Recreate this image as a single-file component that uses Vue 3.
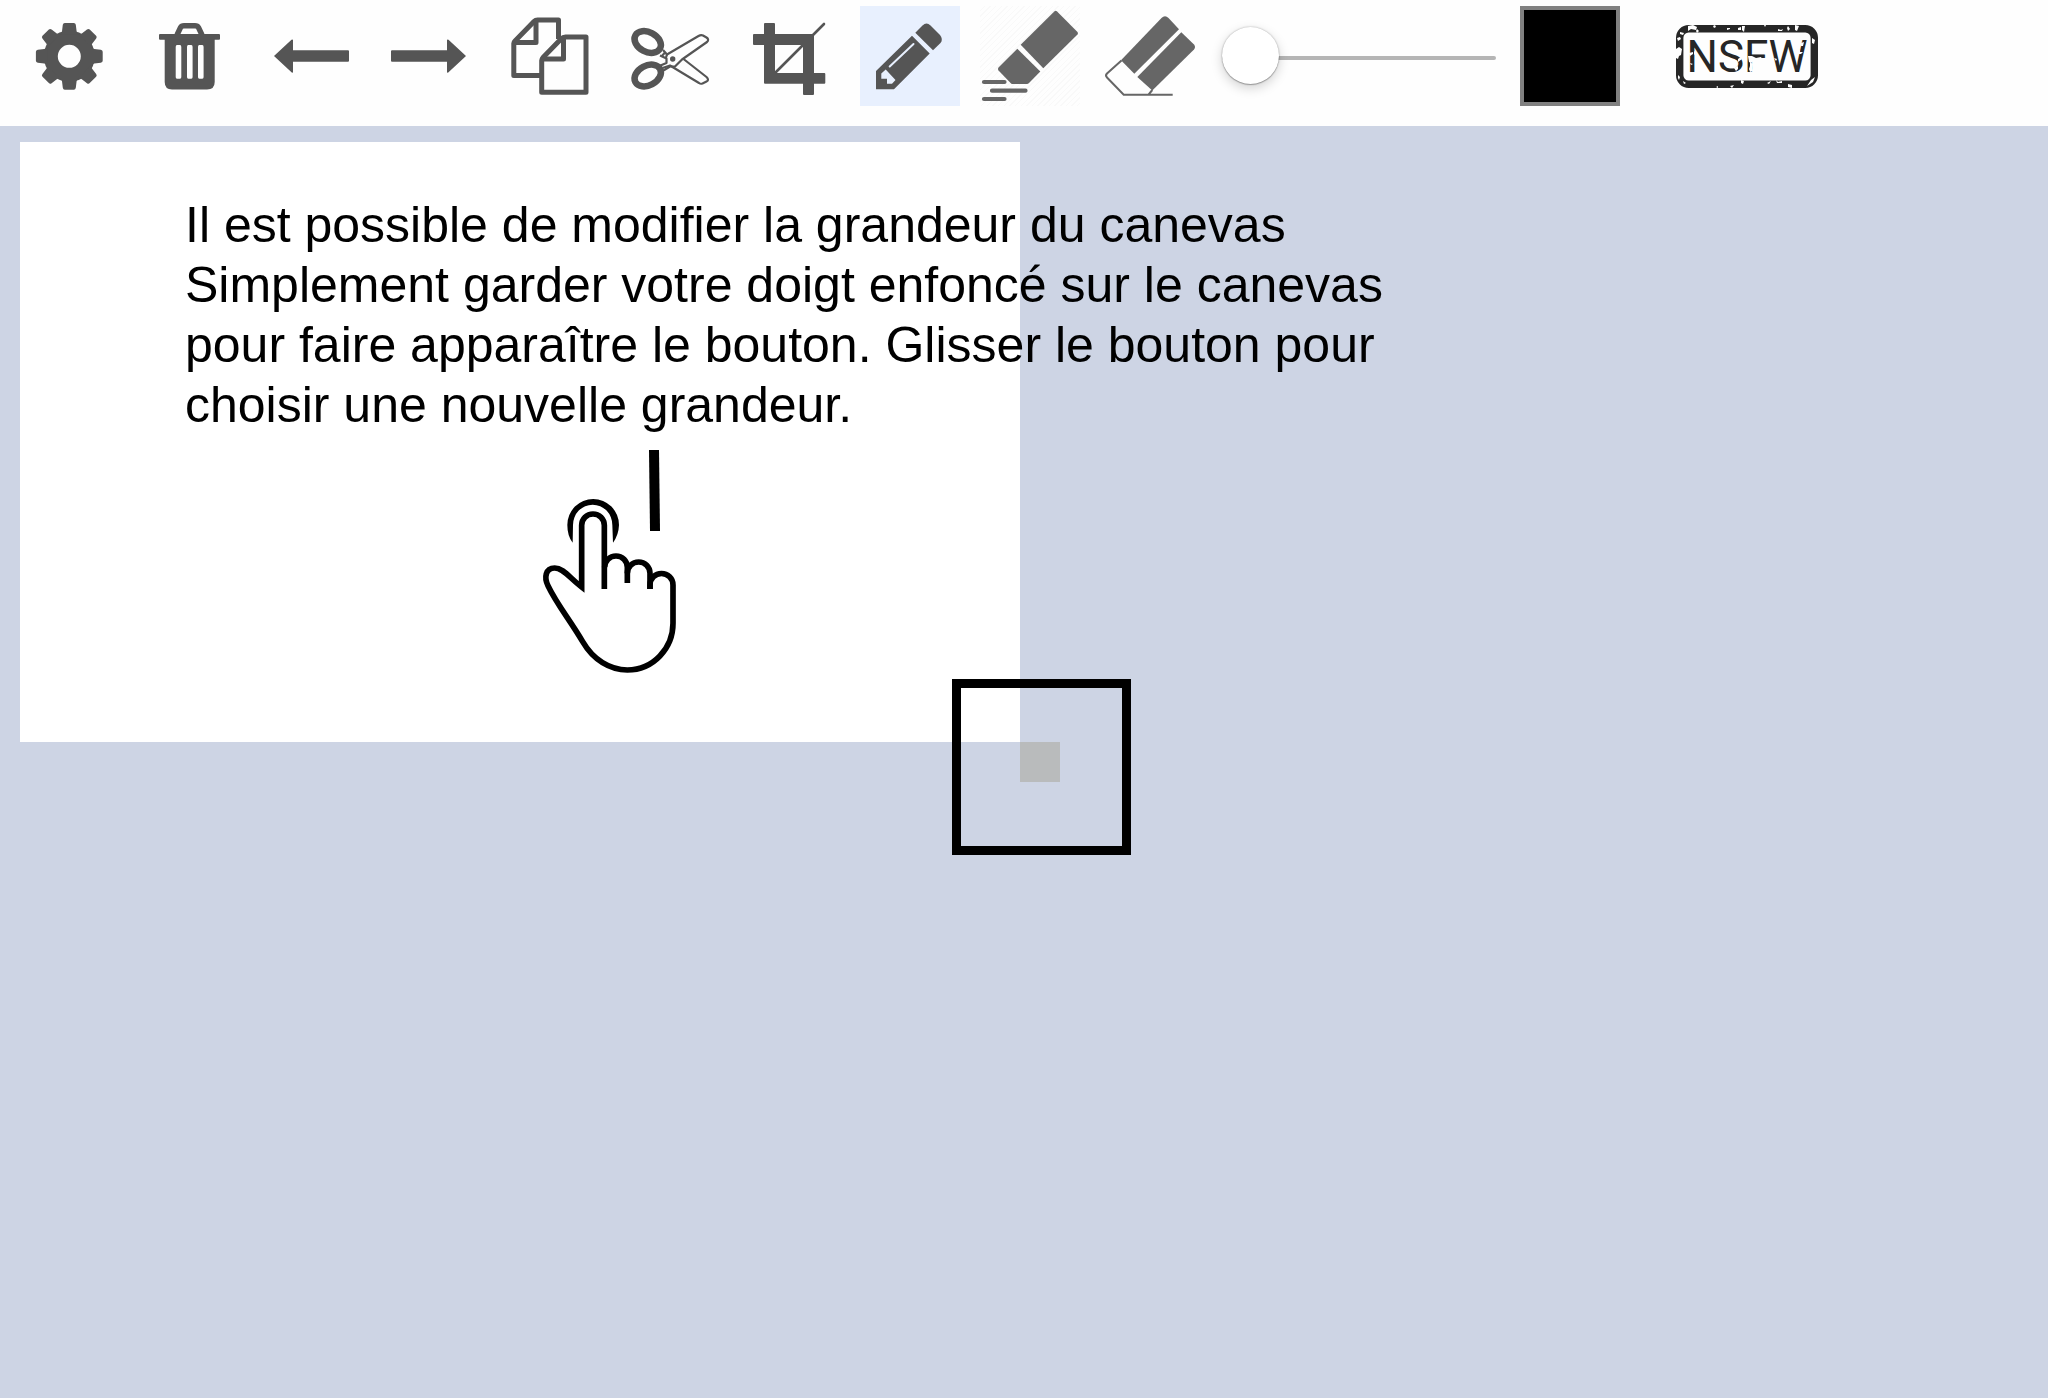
<script setup>
import { ref } from 'vue'

const tool = ref('pencil')
const size = ref(1)
const color = ref('#000000')
const teeth = [0, 45, 90, 135, 180, 225, 270, 315]
</script>

<template>
  <div class="app">
    <header class="toolbar" role="toolbar" aria-label="Outils de dessin">
      <button class="tool" type="button" aria-label="Paramètres">
        <svg viewBox="0 0 100 100">
          <g transform="translate(49.3 50.3)">
            <circle r="18.5" fill="none" stroke="currentColor" stroke-width="14" />
            <path
              v-for="a in teeth"
              :key="a"
              :transform="`rotate(${a})`"
              d="M-9.500-22 Q-7.500-23-7.300-25 L-6.500-31.500 Q-6.200-33.400-4.500-33.400 H4.500 Q6.200-33.400 6.500-31.500 L7.300-25 Q7.500-23 9.500-22Z"
            />
          </g>
        </svg>
      </button>
      <button class="tool" type="button" aria-label="Supprimer">
        <svg viewBox="0 0 100 100">
          <path d="M37 29 L40.500 21.500 Q41.500 19.700 44 19.700 H55 Q57.500 19.700 58.500 21.500 L62 29" fill="none" stroke="currentColor" stroke-width="5.400" />
          <rect x="19" y="28" width="61" height="5.700" rx="1" />
          <path fill-rule="evenodd" d="M24.700 32 H74.700 V76 Q74.700 83.400 67 83.400 H32 Q24.700 83.400 24.700 76Z M37 39 Q35.700 39 35.700 41 V71 Q35.700 72.700 37 72.700 H40 Q41.300 72.700 41.300 71 V41 Q41.300 39 40 39Z M48.300 39 Q47 39 47 41 V71 Q47 72.700 48.300 72.700 H51.300 Q52.600 72.700 52.600 71 V41 Q52.600 39 51.300 39Z M59.300 39 Q58 39 58 41 V71 Q58 72.700 59.300 72.700 H62.300 Q63.600 72.700 63.600 71 V41 Q63.600 39 62.300 39Z" />
        </svg>
      </button>
      <button class="tool" type="button" aria-label="Annuler">
        <svg viewBox="0 0 100 100">
          <path d="M14 50 L31.500 33.800 Q33 33 33 34.500 V44.300 H88 Q89 44.300 89 45.300 V54.700 Q89 55.700 88 55.700 H33 V65.500 Q33 67.500 31.500 66.200Z" />
        </svg>
      </button>
      <button class="tool" type="button" aria-label="Rétablir">
        <svg viewBox="0 0 100 100">
          <path d="M86 50 L68.500 33.800 Q67 33 67 34.500 V44.300 H12 Q11 44.300 11 45.300 V54.700 Q11 55.700 12 55.700 H67 V65.500 Q67 67.500 68.500 66.200Z" />
        </svg>
      </button>
      <button class="tool" type="button" aria-label="Copier">
        <svg viewBox="0 0 100 100">
          <g fill="none" stroke="currentColor" stroke-width="5" stroke-linejoin="round">
            <path d="M41.700 69.500 H13.800 V37.500 Q14 36 15 35 L34 15.500 Q35.500 14 37.500 14 H58.500 V33" />
            <path d="M36 14 V36.500 H14" />
            <path d="M41.700 86.300 V54.500 Q42 52.500 43 51.500 L61 33 Q63 31 65.500 31 H86 V86.300Z" />
            <path d="M63.500 31 V53 H42" />
          </g>
        </svg>
      </button>
      <button class="tool" type="button" aria-label="Couper">
        <svg viewBox="0 0 100 100">
          <g fill="none" stroke="currentColor" stroke-linejoin="round">
            <ellipse cx="27.700" cy="36" rx="14" ry="9.800" transform="rotate(28 27.700 36)" stroke-width="6.500" />
            <ellipse cx="27.700" cy="69.500" rx="14" ry="9.800" transform="rotate(-28 27.700 69.500)" stroke-width="6.500" />
            <path stroke-width="2.200" d="M43 44 L47 48.500 L78.500 30 Q81 28.500 83 29.500 L86.500 31.500 Q89.500 33.500 87 36 L62 53.500 L55 60.500 H50 L41 66" />
            <path stroke-width="2.200" d="M40 49.500 L46.500 52.500 V57 L38 60.500 M45 46.500 L41.500 50.500 M47 48.500 L45.500 53" />
            <path stroke-width="2.200" d="M63.500 53 L86.500 71 Q89.500 74 86.500 75.500 L82.500 77.500 Q80.500 78.200 79 77 L50 59.500 L42.500 62" />
          </g>
          <circle cx="52.700" cy="53" r="2.700" />
        </svg>
      </button>
      <button class="tool" type="button" aria-label="Recadrer">
        <svg viewBox="0 0 100 100">
          <path fill-rule="evenodd" d="M25 17 H34 Q35 17 35 18 V28 H73 Q74 28 74 29 V67 H84.300 Q85.300 67 85.300 68 V76.700 Q85.300 77.700 84.300 77.700 H74 V88 Q74 89 73 89 H64 Q63 89 63 88 V77.700 H25 Q24 77.700 24 76.700 V39 H14 Q13 39 13 38 V29 Q13 28 14 28 H24 V18 Q24 17 25 17Z M35 39 V67 H63 V39Z" />
          <path d="M36 66 L84 18" fill="none" stroke="currentColor" stroke-width="2.600" stroke-linecap="round" />
        </svg>
      </button>
      <button class="tool" :class="{ active: tool === 'pencil' }" :aria-pressed="tool === 'pencil'" type="button" aria-label="Crayon" @click="tool = 'pencil'">
        <svg viewBox="0 0 100 100">
          <path fill-rule="evenodd" d="M16 65 L52 29.700 L69.700 47.500 L34 83.300 H16Z M21.300 67.500 V72.700 H27 V77.700 H32 L35.500 74 L25.700 63.500Z" />
          <path d="M55.300 26.700 L62.500 19.500 Q66.500 15.500 70.500 19.500 L80 29 Q83.500 33.500 80.500 37 L73 44.300Z" />
          <path d="M29.700 60.500 L53.500 38" class="highlight" />
        </svg>
      </button>
      <button class="tool marker" type="button" aria-label="Surligneur" @click="tool = 'marker'">
        <svg viewBox="0 0 100 100">
          <path d="M40.700 38.700 L74.300 5.500 Q75.700 4.200 77.100 5.500 L97.500 26 Q98.500 27.300 97.500 28.500 L63.300 62.300Z" />
          <path d="M37.300 42.700 L18.500 61.500 Q17.500 63 18.500 64.500 L31.300 77.700 Q32 78 33 78 H47 Q48 78 49 77 L60.300 65.500Z" />
          <path d="M4 76 H24.500 M12 84.700 H45.500 M4 93 H24.500" fill="none" stroke="currentColor" stroke-width="4.200" stroke-linecap="round" />
        </svg>
      </button>
      <button class="tool eraser" type="button" aria-label="Gomme" @click="tool = 'eraser'">
        <svg viewBox="0 0 100 100">
          <path d="M21 54.300 L61.500 12 Q65 8.500 68.500 12 L79 23.300 L34.300 67.700Z" />
          <path d="M81.300 26.300 L94 38.500 Q96 41 94 43.500 L52.300 84.500 L37.300 71Z" />
          <path d="M21.500 54.500 L7 67.500 Q5 69.500 7 71.500 L23.700 88.700 H72.700 M48.500 88.700 L52.300 84" fill="none" stroke="currentColor" stroke-width="2" />
        </svg>
      </button>
      <div class="slider">
        <input v-model="size" type="range" min="1" max="50" aria-label="Épaisseur du trait" />
      </div>
      <input v-model="color" class="swatch" type="color" aria-label="Couleur" />
      <button class="stamp" type="button">
        <svg viewBox="0 0 142 63">
          <rect x="3.700" y="3.700" width="134.600" height="55.600" rx="9" fill="none" stroke="currentColor" stroke-width="7.400" />
          <text x="71" y="47" text-anchor="middle">NSFW</text>
          <path class="wear" d="M12 1l5-1 4 2-1 3-5-1-3 2z M21 4l2 2-2 2-1-2z M1 13l3-1 1 2-3 2z M4 7l4 1-1 2-3-1z M0 24l3-2 3 2-1 6-2 1-1 3-2-1z M38 0l2 1-1 2-2-1z M51 3l3 0 0 1-3 1z M62 3l3-1 0 3-3 0z M66 1l3 0-1 6-2-2z M88 0l2 0-1 2z M102 4l3 1 2-1-1 2-4 0z M112 1l2 3-2 2-1-3z M119 0l4 1-2 5-2-1z M136 13l3 2-1 4-2-1z M135 55l4-3-2 5-6 4z M112 59l4 1 0 3-4-1z M100 55l2 2 4-1 0 2-5 0z M91 58l4-2-2 3z M65 55l3 1-1 3-2-1z M54 61l4-1-2 3z M40 62l2-1 0 2z M2 50l2 2-1 3-1-2z M7 56l3 2-2 1z" />
          <path class="wear" d="M13 28l4-1 0 2-3 2z M18 26l3 2 2 6-2-1-3-4z M14 38l3 1-2 1z M29 44l3 1-1 2z M48 37l3 2 0-2 2 1-1 3-4-2z M58 43l4-2 0 3-2 2z M62 34l3-2 1 2-4 3z M72 31l4 0 4 2 5-1 1 2-7 1-4 3-2-1z M74 37l3 2-1 4 1 3-3 1-1-3 1-3z M90 24l3 2-1 1z M98 33l3 1-1 2z M121 26l3-1 0 2 3 0-2 2-3 0z M125 18l3-1-1 4-2 0z" />
        </svg>
      </button>
    </header>

    <main class="workspace">
      <section class="canvas">
        <p class="help">
          Il est possible de modifier la grandeur du canevas<br />
          Simplement garder votre doigt enfoncé sur le canevas<br />
          pour faire apparaître le bouton. Glisser le bouton pour<br />
          choisir une nouvelle grandeur.
        </p>
        <svg class="hand" viewBox="0 0 540 780" aria-hidden="true">
          <path d="M387 60 H417 L420 303 H390Z" />
          <path d="M158 338 Q142 318 142 285 A77.500 78 0 0 1 297 285 Q296 315 279 338 L277 285 A58 60 0 0 0 159 285Z" />
          <g fill="none" stroke="#000" stroke-width="17">
            <path d="M253 477 V286 A34 34 0 0 0 185 286 V471 C150 445 130 414 104 414 C76 414 72 443 84 467 C110 522 152 573 188 635 C220 690 270 720 322 720 C400 720 459 655 459 580 V465 A34 34 0 0 0 390 465 V477" />
            <path d="M254 412 A34 34 0 0 1 322 412 V459" />
            <path d="M322 430 A34 34 0 0 1 390 430 V477" />
          </g>
        </svg>
        <button class="handle" type="button" aria-label="Redimensionner le canevas"></button>
        <div class="frame"></div>
      </section>
    </main>
  </div>
</template>

<style>
body {
  margin: 0;
  background: #cdd4e4;
}
</style>

<style scoped>
.app {
  display: flex;
  flex-direction: column;
  min-height: 100vh;
  background: #cdd4e4;
  font-family: "Liberation Sans", Arial, sans-serif;
}
.toolbar {
  display: flex;
  flex-wrap: wrap;
  gap: 20px;
  padding: 6px 20px 20px;
  background: #fefefe;
}
.tool {
  flex: none;
  width: 100px;
  height: 100px;
  padding: 0;
  border: 0;
  background: none;
  color: #555;
  cursor: pointer;
}
.tool svg,
.stamp svg {
  display: block;
  width: 100%;
  fill: currentColor;
}
.tool.active {
  background: #e8f0fe;
}
.tool.active .highlight {
  stroke: #e8f0fe;
}
.highlight {
  fill: none;
  stroke: #fefefe;
  stroke-width: 2;
  stroke-linecap: round;
}
.marker,
.eraser {
  color: #666;
}
.marker {
  background: repeating-linear-gradient(135deg, #fefefe 0 3px, #f9f9f9 3px 4px);
}
.slider {
  display: flex;
  align-items: center;
  box-sizing: border-box;
  width: 280px;
  height: 100px;
  padding: 4px 4px 0 2px;
}
.slider input {
  appearance: none;
  width: 100%;
  height: 56px;
  margin: 0;
  background: none;
}
.slider input::-webkit-slider-runnable-track {
  height: 4px;
  border-radius: 2px;
  background: #b5b5b5;
}
.slider input::-webkit-slider-thumb {
  appearance: none;
  width: 57px;
  height: 57px;
  margin-top: -29px;
  border-radius: 50%;
  background: #fff;
  box-shadow: 0 0 2px rgba(0, 0, 0, 0.3), 0 1px 1px rgba(0, 0, 0, 0.25), 0 4px 12px rgba(0, 0, 0, 0.18);
}
.swatch {
  appearance: none;
  box-sizing: border-box;
  width: 100px;
  height: 100px;
  padding: 0;
  border: 4px solid #808080;
  background: #000;
}
.swatch::-webkit-color-swatch-wrapper {
  padding: 0;
}
.swatch::-webkit-color-swatch {
  border: 0;
}
.stamp {
  width: 214px;
  height: 100px;
  padding: 0 36px;
  border: 0;
  background: none;
  color: #262626;
}
.stamp text {
  font-family: Roboto, "Liberation Sans", sans-serif;
  font-size: 44px;
}
.wear {
  fill: #fefefe;
}
.workspace {
  flex: 1;
  padding: 16px 20px;
}
.canvas {
  position: relative;
  box-sizing: border-box;
  width: 1000px;
  height: 600px;
  padding: 53px 0 0 165px;
  background: #fff;
}
.help {
  margin: 0;
  color: #000;
  font-size: 50px;
  line-height: 60px;
  white-space: nowrap;
}
.hand {
  position: absolute;
  left: 500px;
  top: 288px;
  width: 180px;
}
.handle {
  position: absolute;
  left: 100%;
  top: 100%;
  width: 40px;
  height: 40px;
  padding: 0;
  border: 0;
  background: #b9bbbc;
  cursor: nwse-resize;
}
.frame {
  position: absolute;
  left: 932px;
  top: 537px;
  box-sizing: border-box;
  width: 179px;
  height: 176px;
  border: 9px solid #000;
  pointer-events: none;
}
</style>
